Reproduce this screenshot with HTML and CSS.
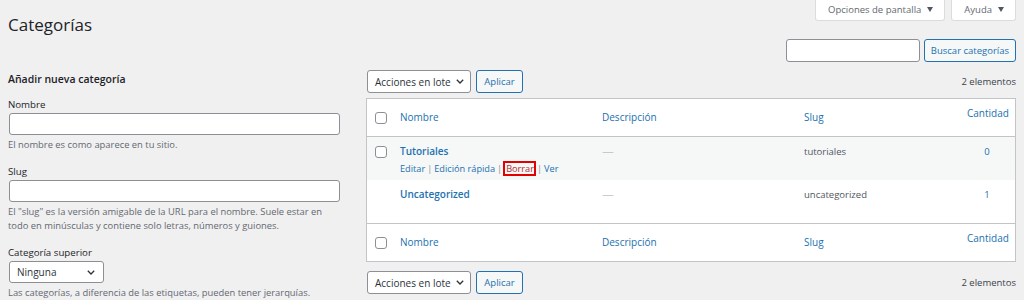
FILE: index.html
```html
<!DOCTYPE html>
<html lang="es">
<head>
<meta charset="utf-8">
<title>Categorías</title>
<link rel="stylesheet" href="styles.css">
</head>
<body>
<div class="wrap">
  <div class="top">
    <h1 class="page-title">Categorías</h1>
    <div class="top-right">
      <div class="meta-links">
        <div class="meta-tab">Opciones de pantalla <span class="tri"></span></div>
        <div class="meta-tab">Ayuda <span class="tri"></span></div>
      </div>
      <div class="search">
        <span class="input search-input"></span>
        <span class="btn">Buscar categorías</span>
      </div>
    </div>
  </div>
  <div class="cols">
    <div class="col-left">
      <h2 class="form-title">Añadir nueva categoría</h2>
      <div class="field">
        <div class="label">Nombre</div>
        <span class="input wide"></span>
        <p class="help">El nombre es como aparece en tu sitio.</p>
      </div>
      <div class="field">
        <div class="label">Slug</div>
        <span class="input wide"></span>
        <p class="help">El "slug" es la versión amigable de la URL para el nombre. Suele estar en todo en minúsculas y contiene solo letras, números y guiones.</p>
      </div>
      <div class="field">
        <div class="label">Categoría superior</div>
        <span class="select select-parent">Ninguna <svg class="chev" width="8" height="5" viewBox="0 0 8 5"><path d="M0.8 0.8 L4 4 L7.2 0.8" fill="none" stroke="#2c3338" stroke-width="1.3"/></svg></span>
        <p class="help">Las categorías, a diferencia de las etiquetas, pueden tener jerarquías.</p>
      </div>
    </div>
    <div class="col-right">
      <div class="tablenav">
        <span class="select select-bulk">Acciones en lote <svg class="chev" width="8" height="5" viewBox="0 0 8 5"><path d="M0.8 0.8 L4 4 L7.2 0.8" fill="none" stroke="#2c3338" stroke-width="1.3"/></svg></span>
        <span class="btn btn-apply">Aplicar</span>
        <span class="count">2 elementos</span>
      </div>
      <table class="list">
        <thead>
          <tr>
            <th class="c-cb"><span class="cb"></span></th>
            <th class="c-name"><a class="hl">Nombre</a></th>
            <th class="c-desc"><a class="hl">Descripción</a></th>
            <th class="c-slug"><a class="hl">Slug</a></th>
            <th class="c-num"><a class="hl">Cantidad</a></th>
          </tr>
        </thead>
        <tbody>
          <tr class="alt">
            <td class="c-cb"><span class="cb"></span></td>
            <td class="c-name">
              <a class="row-title">Tutoriales</a>
              <div class="row-actions"><a>Editar</a><span class="sep">|</span><a>Edición rápida</a><span class="sep sep-before">|</span><span class="mark"><a class="del">Borrar</a></span><span class="sep sep-after">|</span><a>Ver</a></div>
            </td>
            <td class="c-desc"><span class="dash">—</span></td>
            <td class="c-slug">tutoriales</td>
            <td class="c-num"><a class="numlink">0</a></td>
          </tr>
          <tr>
            <td class="c-cb"></td>
            <td class="c-name">
              <a class="row-title">Uncategorized</a>
              <div class="row-actions hidden"><a>Editar</a></div>
            </td>
            <td class="c-desc"><span class="dash">—</span></td>
            <td class="c-slug">uncategorized</td>
            <td class="c-num"><a class="numlink">1</a></td>
          </tr>
        </tbody>
        <tfoot>
          <tr>
            <th class="c-cb"><span class="cb"></span></th>
            <th class="c-name"><a class="hl">Nombre</a></th>
            <th class="c-desc"><a class="hl">Descripción</a></th>
            <th class="c-slug"><a class="hl">Slug</a></th>
            <th class="c-num"><a class="hl">Cantidad</a></th>
          </tr>
        </tfoot>
      </table>
      <div class="tablenav bottom">
        <span class="select select-bulk">Acciones en lote <svg class="chev" width="8" height="5" viewBox="0 0 8 5"><path d="M0.8 0.8 L4 4 L7.2 0.8" fill="none" stroke="#2c3338" stroke-width="1.3"/></svg></span>
        <span class="btn btn-apply">Aplicar</span>
        <span class="count">2 elementos</span>
      </div>
    </div>
  </div>
</div>
</body>
</html>
```
FILE: styles.css
```css
html, body {
  margin: 0;
  padding: 0;
  background: #f0f0f1;
}
body {
  font-family: "Open Sans", "Noto Sans", sans-serif;
  font-size: 9.5px;
  color: #3c434a;
  overflow: hidden;
}
.wrap {
  padding: 0 8px;
}
.top {
  display: flex;
  justify-content: space-between;
  align-items: flex-start;
}
.page-title {
  margin: 13px 0 0 0;
  font-size: 17px;
  font-weight: 400;
  line-height: 24px;
  color: #1d2327;
}
.top-right {
  display: flex;
  flex-direction: column;
  align-items: flex-end;
}
.meta-links {
  display: flex;
  gap: 6px;
}
.meta-tab {
  display: flex;
  align-items: center;
  gap: 6px;
  height: 21px;
  box-sizing: border-box;
  padding: 0 11px 2px 12px;
  background: #fff;
  border: 1px solid #dcdcde;
  border-top: none;
  border-radius: 0 0 3px 3px;
  color: #646970;
  font-size: 9.5px;
}
.tri {
  width: 0;
  height: 0;
  border-left: 3px solid transparent;
  border-right: 3px solid transparent;
  border-top: 5px solid #50575e;
}
.search {
  display: flex;
  gap: 4px;
  margin-top: 18px;
}
.input {
  display: block;
  box-sizing: border-box;
  height: 23px;
  background: #fff;
  border: 1px solid #8c8f94;
  border-radius: 3px;
}
.search-input {
  width: 134px;
}
.btn {
  display: flex;
  align-items: center;
  box-sizing: border-box;
  height: 23px;
  padding: 0 6px;
  background: #f6f7f7;
  border: 1px solid #2271b1;
  border-radius: 3px;
  color: #2271b1;
  font-size: 9.5px;
}
.cols {
  display: flex;
  gap: 26px;
  margin-top: 8px;
}
.col-left {
  width: 332px;
  flex: none;
}
.col-right {
  width: 650px;
  flex: none;
}
.form-title {
  margin: 0 0 12px 0;
  padding-top: 2px;
  font-size: 10.5px;
  font-weight: 600;
  line-height: 14px;
  color: #1d2327;
}
.field {
  margin-bottom: 13px;
}
.label {
  line-height: 13px;
  margin-bottom: 2px;
  color: #1d2327;
  font-size: 9.7px;
}
.input.wide {
  width: 331px;
  margin-left: 1px;
  height: 22px;
}
.help {
  margin: 3px 0 0 0;
  line-height: 14px;
  color: #646970;
  font-size: 9.4px;
}
.select {
  display: flex;
  align-items: center;
  justify-content: space-between;
  box-sizing: border-box;
  height: 23px;
  padding: 0 8px 0 7px;
  background: #fff;
  border: 1px solid #8c8f94;
  border-radius: 3px;
  color: #2c3338;
  font-size: 10px;
}
.select-parent {
  width: 95px;
  margin-left: 1px;
  height: 22px;
}
.select-bulk {
  width: 104px;
  padding-right: 6px;
}
.tablenav {
  display: flex;
  align-items: center;
  gap: 5px;
  height: 23px;
  margin-bottom: 5px;
  margin-left: 1px;
}
.tablenav.bottom {
  margin-top: 9px;
  margin-bottom: 0;
}
.btn-apply {
  width: 47px;
  justify-content: center;
  padding: 0;
}
.count {
  margin-left: auto;
  color: #3c434a;
}
.list {
  width: 650px;
  table-layout: fixed;
  border-collapse: separate;
  border-spacing: 0;
  background: #fff;
  border: 1px solid #c3c4c7;
  box-sizing: border-box;
}
.list th {
  text-align: left;
  font-weight: 400;
  font-size: 10px;
  line-height: 15px;
  padding: 11px 8px;
  vertical-align: middle;
}
.list thead th {
  border-bottom: 1px solid #c3c4c7;
}
.list tfoot th {
  border-top: 1px solid #c3c4c7;
}
.list td {
  font-size: 9.5px;
  line-height: 15px;
  padding: 7px 8px 4px 8px;
  vertical-align: top;
  color: #50575e;
}
.list tr.alt td {
  background: #f6f7f7;
}
.list .c-cb {
  width: 25px;
  box-sizing: border-box;
  padding-left: 8px;
  padding-right: 0;
}
.list td.c-cb {
  padding-top: 9px;
}
.list .c-name {
  width: 202px;
  box-sizing: border-box;
}
.list .c-desc {
  width: 202px;
  box-sizing: border-box;
}
.list .c-slug {
  width: 163px;
  box-sizing: border-box;
}
.list .c-num {
  box-sizing: border-box;
  text-align: right;
  padding-right: 7px;
}
.list th.c-num {
  vertical-align: top;
  padding-top: 7px;
}
.list td.c-num {
  text-align: center;
  padding-left: 0;
  padding-right: 0;
}
.cb {
  display: block;
  width: 12px;
  height: 12px;
  box-sizing: border-box;
  border: 1px solid #8c8f94;
  border-radius: 3px;
  background: #fff;
}
.hl {
  color: #2271b1;
  text-decoration: none;
}
.row-title {
  display: block;
  font-size: 10px;
  font-weight: 600;
  color: #2271b1;
}
.row-actions {
  margin-top: 2px;
  font-size: 9.2px;
  line-height: 15px;
  white-space: nowrap;
}
.row-actions.hidden {
  visibility: hidden;
}
.row-actions a {
  color: #2271b1;
}
.sep {
  margin: 0 2px;
  color: #8c8f94;
}
.sep-before {
  margin-right: 1px;
}
.sep-after {
  margin-left: 1px;
}
.mark {
  display: inline-block;
  border: 2px solid #e30000;
  padding: 0 0 0 1px;
  line-height: 11px;
}
.del {
  color: #b32d2e !important;
}
.dash {
  color: #a7aaad;
  display: inline-block;
  transform: scaleX(1.25);
  transform-origin: left center;
}
.numlink {
  color: #2271b1;
}
```
